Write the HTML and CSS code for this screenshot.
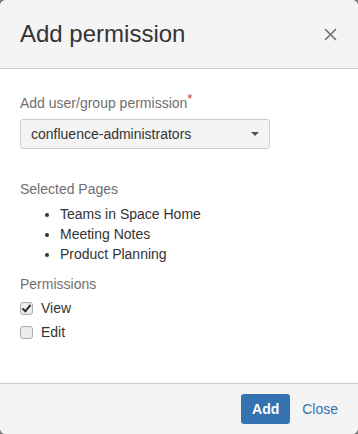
FILE: index.html
```html
<!DOCTYPE html>
<html lang="en">
<head>
    <meta charset="UTF-8">
    <meta name="viewport" content="width=device-width, initial-scale=1.0">
    <title>Add permission</title>
    <link rel="stylesheet" href="styles.css">
</head>
<body>

    <div class="modal">
        <div class="modal-header">
            <h2>Add permission</h2>
            <button class="close-btn" aria-label="Close">
                <svg width="13" height="13" viewBox="0 0 13 13">
                    <path d="M1 1 L12 12 M12 1 L1 12" stroke="#707070" stroke-width="1.6" fill="none"/>
                </svg>
            </button>
        </div>

        <div class="modal-body">
            <label class="field-label">Add user/group permission<span class="req">*</span></label>
            <div class="select-box">
                <span>confluence-administrators</span>
                <span class="caret"></span>
            </div>

            <div class="section-label">Selected Pages</div>
            <ul class="pages">
                <li>Teams in Space Home</li>
                <li>Meeting Notes</li>
                <li>Product Planning</li>
            </ul>

            <div class="section-label perms">Permissions</div>
            <label class="check"><input type="checkbox" checked> View</label>
            <label class="check"><input type="checkbox"> Edit</label>
        </div>

        <div class="modal-footer">
            <button class="btn-add">Add</button>
            <a href="#" class="close-link">Close</a>
        </div>
    </div>

</body>
</html>
```

FILE: styles.css
```css
html {
    background-color: #7a7a7a;
}
body {
    margin: 0;
    font-family: "Liberation Sans", Arial, sans-serif;
    font-size: 14px;
    color: #333;
}
.modal {
    background-color: white;
    border-radius: 6px;
    height: 434px;
    display: flex;
    flex-direction: column;
    overflow: hidden;
}
.modal-header {
    background-color: #f4f4f4;
    border-bottom: 1px solid #ccc;
    height: 68px;
    padding: 0 21px 0 20px;
    display: flex;
    align-items: center;
    justify-content: space-between;
}
.modal-header h2 {
    margin: 0;
    font-size: 24px;
    font-weight: normal;
    color: #333;
}
.close-btn {
    background: none;
    border: none;
    padding: 0;
    display: flex;
    cursor: pointer;
}
.modal-body {
    flex: 1;
    padding: 24px 20px 0;
}
.field-label {
    display: block;
    color: #707070;
    line-height: 20px;
    margin-bottom: 6px;
}
.req {
    color: #d04437;
    vertical-align: top;
    font-size: 13px;
    position: relative;
    top: -4px;
}
.select-box {
    box-sizing: border-box;
    width: 250px;
    height: 30px;
    border: 1px solid #ccc;
    border-radius: 3px;
    background-color: #f4f4f4;
    display: flex;
    align-items: center;
    justify-content: space-between;
    padding: 0 10px;
}
.caret {
    width: 0;
    height: 0;
    border-left: 4px solid transparent;
    border-right: 4px solid transparent;
    border-top: 4px solid #555;
}
.section-label {
    color: #707070;
    line-height: 20px;
    margin-top: 30px;
}
.pages {
    margin: 5px 0 0;
    padding-left: 40px;
    line-height: 20px;
}
.section-label.perms {
    margin-top: 10px;
}
.check {
    display: flex;
    align-items: center;
    line-height: 20px;
    margin-top: 4px;
}
.check input {
    appearance: none;
    -webkit-appearance: none;
    box-sizing: border-box;
    margin: 0 8px 0 0;
    width: 13px;
    height: 13px;
    border: 1px solid #aaa;
    border-radius: 3px;
    background-color: #ececec;
    position: relative;
}
.check input:checked::after {
    content: "";
    position: absolute;
    left: 3px;
    top: 0px;
    width: 3px;
    height: 7px;
    border: solid #333;
    border-width: 0 2px 2px 0;
    transform: rotate(40deg);
}
.modal-footer {
    background-color: #f4f4f4;
    border-top: 1px solid #ccc;
    height: 50px;
    display: flex;
    align-items: center;
    justify-content: flex-end;
    padding: 0 20px;
}
.btn-add {
    background-color: #3572b0;
    color: white;
    font-family: "Liberation Sans", Arial, sans-serif;
    font-size: 14px;
    font-weight: bold;
    border: none;
    border-radius: 3px;
    width: 49px;
    height: 30px;
    cursor: pointer;
}
.close-link {
    color: #3572b0;
    text-decoration: none;
    margin-left: 12px;
}
```
